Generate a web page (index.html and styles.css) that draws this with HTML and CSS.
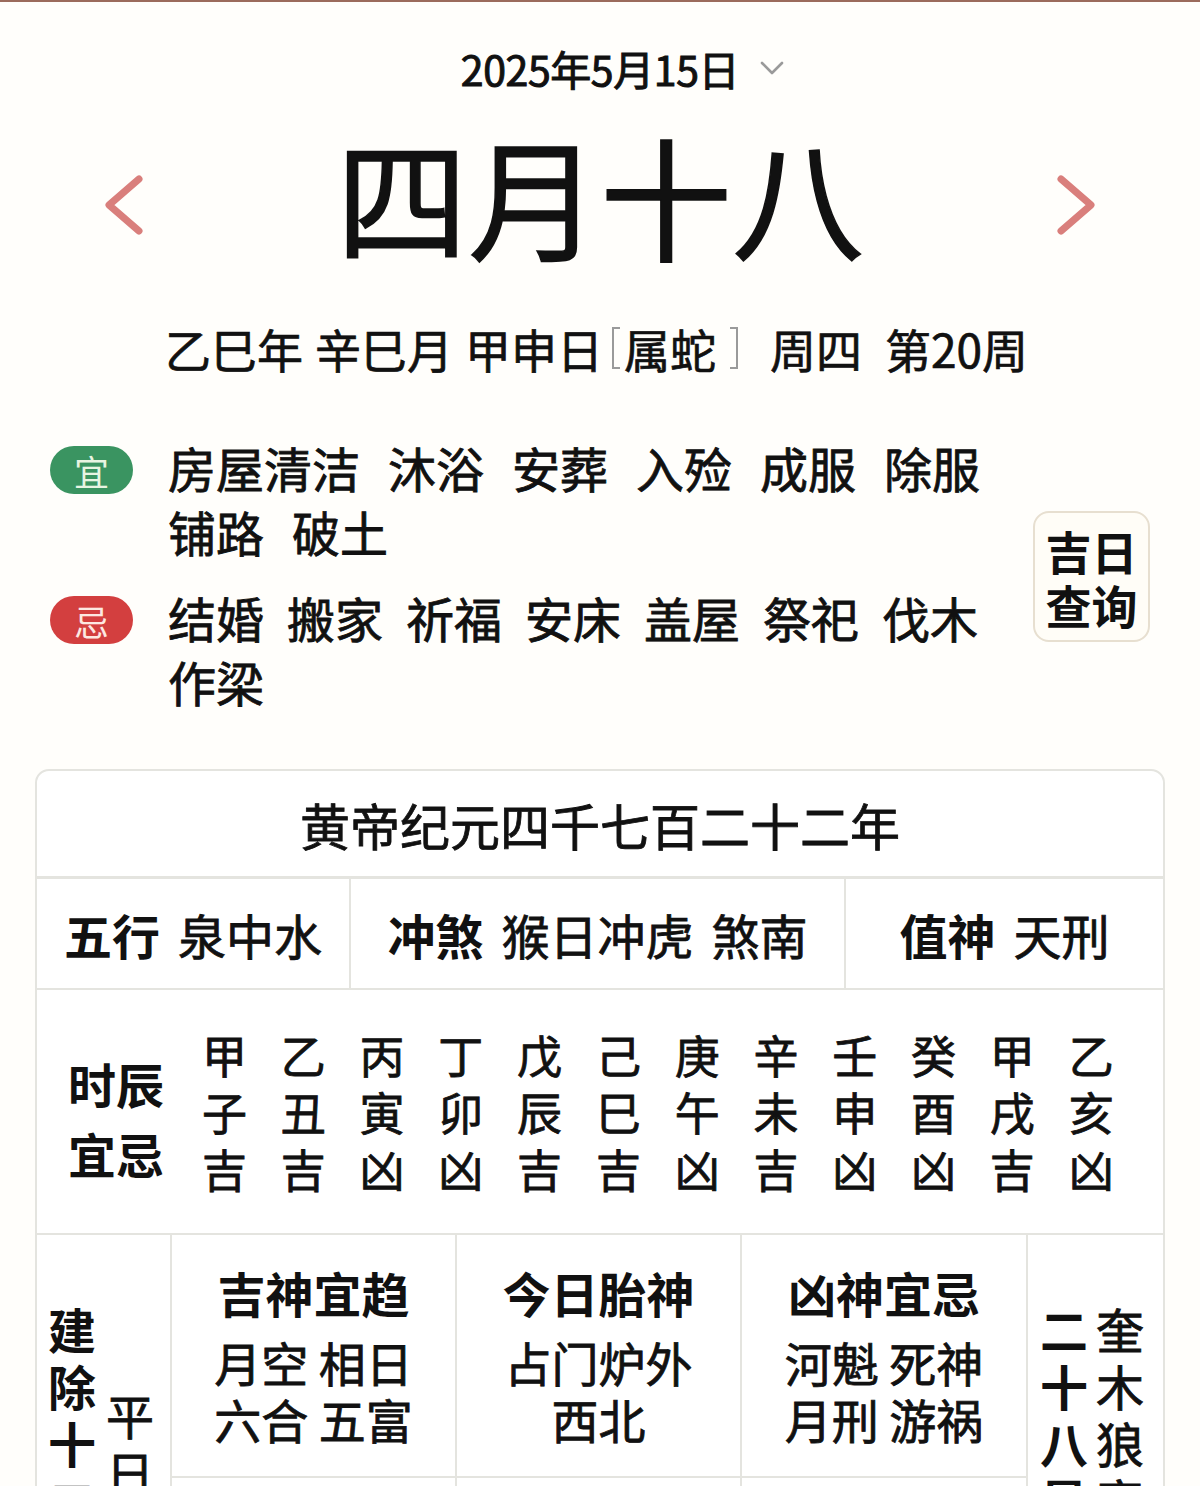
FILE: index.html
```html
<!DOCTYPE html>
<html lang="zh-CN">
<head>
<meta charset="utf-8">
<title>黄历</title>
<link rel="stylesheet" href="styles.css">
</head>
<body>
<div class="page">
  <div class="topline"></div>

  <header class="date-row">
    <span class="date">2025年5月15日</span>
    <svg class="chevron" viewBox="0 0 26 18"><polyline points="3,4 13,14 23,4" fill="none" stroke="#9a9a9a" stroke-width="2.6" stroke-linecap="round" stroke-linejoin="round"/></svg>
  </header>

  <div class="lunar-row">
    <svg class="arrow arrow-left" viewBox="0 0 44 64"><polyline points="38,6 8,32 38,58" fill="none" stroke="#d97f7c" stroke-width="7" stroke-linecap="round" stroke-linejoin="round"/></svg>
    <h1 class="lunar">四月十八</h1>
    <svg class="arrow arrow-right" viewBox="0 0 44 64"><polyline points="6,6 36,32 6,58" fill="none" stroke="#d97f7c" stroke-width="7" stroke-linecap="round" stroke-linejoin="round"/></svg>
  </div>

  <div class="ganzhi">
    <span>乙巳年</span>
    <span class="gz-gap">辛巳月</span>
    <span class="gz-gap">甲申日</span>
    <span class="bracket bracket-l"></span>
    <span class="gz-zodiac">属蛇</span>
    <span class="bracket bracket-r"></span>
    <span class="gz-week">周四</span>
    <span class="gz-num">第20周</span>
  </div>

  <section class="yiji">
    <div class="yiji-list">
      <div class="yiji-item yiji-yi">
        <span class="badge badge-yi">宜</span>
        <div class="words words-yi">
          <span>房屋清洁</span><span>沐浴</span><span>安葬</span><span>入殓</span><span>成服</span><span>除服</span><span>铺路</span><span>破土</span>
        </div>
      </div>
      <div class="yiji-item yiji-ji">
        <span class="badge badge-ji">忌</span>
        <div class="words words-ji">
          <span>结婚</span><span>搬家</span><span>祈福</span><span>安床</span><span>盖屋</span><span>祭祀</span><span>伐木</span><span>作梁</span>
        </div>
      </div>
    </div>
    <button class="jiri">吉日<br>查询</button>
  </section>

  <section class="card">
    <div class="row row-era">黄帝纪元四千七百二十二年</div>

    <div class="row row-info">
      <div class="info-cell"><b>五行</b><span class="val">泉中水</span></div>
      <div class="info-cell"><b>冲煞</b><span class="val">猴日冲虎</span><span class="val">煞南</span></div>
      <div class="info-cell"><b>值神</b><span class="val">天刑</span></div>
    </div>

    <div class="row row-hours">
      <div class="hours-label">时辰<br>宜忌</div>
      <div class="hours-grid">
        <span>甲</span><span>乙</span><span>丙</span><span>丁</span><span>戊</span><span>己</span><span>庚</span><span>辛</span><span>壬</span><span>癸</span><span>甲</span><span>乙</span>
        <span>子</span><span>丑</span><span>寅</span><span>卯</span><span>辰</span><span>巳</span><span>午</span><span>未</span><span>申</span><span>酉</span><span>戌</span><span>亥</span>
        <span>吉</span><span>吉</span><span>凶</span><span>凶</span><span>吉</span><span>吉</span><span>凶</span><span>吉</span><span>凶</span><span>凶</span><span>吉</span><span>凶</span>
      </div>
    </div>

    <div class="row-gods">
      <div class="side side-left">
        <div class="vcol vcol-bold">建除十二神</div>
        <div class="vcol">平日</div>
      </div>
      <div class="god-cell">
        <div class="god-title">吉神宜趋</div>
        <div class="god-line">月空 相日</div>
        <div class="god-line">六合 五富</div>
      </div>
      <div class="god-cell">
        <div class="god-title">今日胎神</div>
        <div class="god-line">占门炉外</div>
        <div class="god-line">西北</div>
      </div>
      <div class="god-cell">
        <div class="god-title">凶神宜忌</div>
        <div class="god-line">河魁 死神</div>
        <div class="god-line">月刑 游祸</div>
      </div>
      <div class="side side-right">
        <div class="vcol vcol-bold">二十八星宿</div>
        <div class="vcol">奎木狼宿吉</div>
      </div>
      <div class="god-cell god-sub"></div>
      <div class="god-cell god-sub"></div>
      <div class="god-cell god-sub"></div>
    </div>
  </section>
</div>
</body>
</html>
```

FILE: styles.css
```css
* { box-sizing: border-box; }

body {
  margin: 0;
  background: #fffefb;
  font-family: "Noto Sans CJK SC", "Noto Sans", sans-serif;
  color: #111;
}

.page {
  width: 1200px;
  height: 1486px;
  overflow: hidden;
}

.topline {
  height: 2px;
  background: #9b6b5c;
}

/* date header */
.date-row {
  display: flex;
  justify-content: center;
  align-items: center;
  margin-top: 42px;
  height: 48px;
  padding-left: 46px;
}
.date {
  font-size: 41px;
  line-height: 48px;
  font-weight: 400;
  letter-spacing: -0.4px;
  -webkit-text-stroke: 1px currentColor;
}
.chevron {
  width: 26px;
  height: 18px;
  margin-left: 20px;
}

/* lunar title */
.lunar-row {
  display: grid;
  grid-template-columns: 1fr auto 1fr;
  align-items: start;
  margin-top: 36px;
}
.lunar {
  margin: 0;
  font-size: 132px;
  line-height: 132px;
  font-weight: 400;
  -webkit-text-stroke: 1.5px currentColor;
}
.arrow {
  width: 44px;
  height: 64px;
  margin-top: 45px;
}
.arrow-left { justify-self: start; margin-left: 101px; }
.arrow-right { justify-self: end; margin-right: 101px; }

/* ganzhi line */
.ganzhi {
  display: flex;
  align-items: center;
  margin-top: 62px;
  padding-left: 165px;
  font-size: 46px;
  line-height: 52px;
  font-weight: 400;
  -webkit-text-stroke: 0.7px currentColor;
}
.gz-gap { margin-left: 12px; }
.bracket {
  display: inline-block;
  width: 8px;
  height: 42px;
  border-top: 2px solid #9a9a9a;
  border-bottom: 2px solid #9a9a9a;
}
.bracket-l { margin-left: 9px; border-left: 2px solid #9a9a9a; }
.bracket-r { margin-left: 14px; border-right: 2px solid #9a9a9a; }
.gz-zodiac { margin-left: 4px; }
.gz-week { margin-left: 32px; }
.gz-num { margin-left: 23px; }

/* yi / ji */
.yiji {
  display: flex;
  align-items: center;
  margin-top: 61px;
  padding: 0 50px;
}
.yiji-list {
  flex: 1;
}
.yiji-item {
  display: flex;
  align-items: flex-start;
}
.yiji-ji { margin-top: 22px; }
.badge {
  flex-shrink: 0;
  width: 83px;
  height: 48px;
  margin-top: 11px;
  margin-right: 35px;
  border-radius: 24px;
  display: flex;
  align-items: center;
  justify-content: center;
  font-size: 35px;
  font-weight: 400;
}
.badge-yi { background: #3a9461; color: #e8f4e2; }
.badge-ji { background: #d33f3f; color: #fde8e2; }
.words {
  flex: 1;
  display: flex;
  flex-wrap: wrap;
  font-size: 48px;
  line-height: 64px;
  font-weight: 400;
  -webkit-text-stroke: 0.8px currentColor;
}
.words-yi { column-gap: 28px; }
.words-ji { column-gap: 23px; }

.jiri {
  flex-shrink: 0;
  width: 117px;
  height: 131px;
  margin-top: 5px;
  padding: 0;
  border: 2px solid #e7dfd0;
  border-radius: 16px;
  background: #fffdf7;
  font-family: inherit;
  color: #111;
  font-size: 46px;
  line-height: 54px;
  font-weight: 700;
}

/* card */
.card {
  margin: 56px 35px 0;
  border: 2px solid #e4e4df;
  border-radius: 14px;
  background: #fff;
  overflow: hidden;
}
.row {
  border-bottom: 2px solid #e4e4df;
}
.row-era {
  height: 108px;
  border-bottom-width: 3px;
  display: flex;
  align-items: center;
  justify-content: center;
  font-size: 50px;
  font-weight: 400;
  -webkit-text-stroke: 0.8px currentColor;
}

.row-info {
  display: grid;
  grid-template-columns: 314px 495px 1fr;
  height: 111px;
}
.info-cell {
  display: flex;
  align-items: center;
  justify-content: center;
  gap: 18px;
  font-size: 48px;
  font-weight: 400;
  border-right: 2px solid #e4e4df;
}
.info-cell:last-child { border-right: none; }
.info-cell .val { -webkit-text-stroke: 0.8px currentColor; }
.info-cell b { font-weight: 700; }

.row-hours {
  display: flex;
  height: 245px;
}
.hours-label {
  width: 148px;
  padding-left: 31px;
  padding-top: 12px;
  display: flex;
  align-items: center;
  font-size: 48px;
  line-height: 70px;
  font-weight: 700;
}
.hours-grid {
  align-self: center;
  display: grid;
  grid-template-columns: repeat(12, 78.8px);
  grid-auto-rows: 57px;
  font-size: 45px;
  line-height: 57px;
  font-weight: 400;
  -webkit-text-stroke: 0.8px currentColor;
  text-align: center;
}

.row-gods {
  display: grid;
  grid-template-columns: 135px 285px 285px 286px 1fr;
  grid-template-rows: 243px 172px;
}
.side {
  grid-row: span 2;
  display: flex;
  align-items: center;
  gap: 10px;
  padding-left: 11px;
  border-right: 2px solid #e4e4df;
}
.side-right {
  border-right: none;
  padding-left: 12px;
  gap: 8px;
}
.vcol {
  width: 48px;
  font-size: 48px;
  line-height: 57px;
  font-weight: 400;
  -webkit-text-stroke: 0.8px currentColor;
  word-break: break-all;
}
.vcol-bold { font-weight: 700; -webkit-text-stroke: 0; }

.god-cell {
  border-right: 2px solid #e4e4df;
  border-bottom: 2px solid #e4e4df;
  text-align: center;
  padding-top: 29px;
}
.god-title {
  font-size: 48px;
  line-height: 57px;
  font-weight: 700;
  margin-bottom: 12px;
}
.god-line {
  font-size: 47px;
  line-height: 57px;
  font-weight: 400;
  -webkit-text-stroke: 0.8px currentColor;
}
.god-sub { border-bottom: none; }
```
